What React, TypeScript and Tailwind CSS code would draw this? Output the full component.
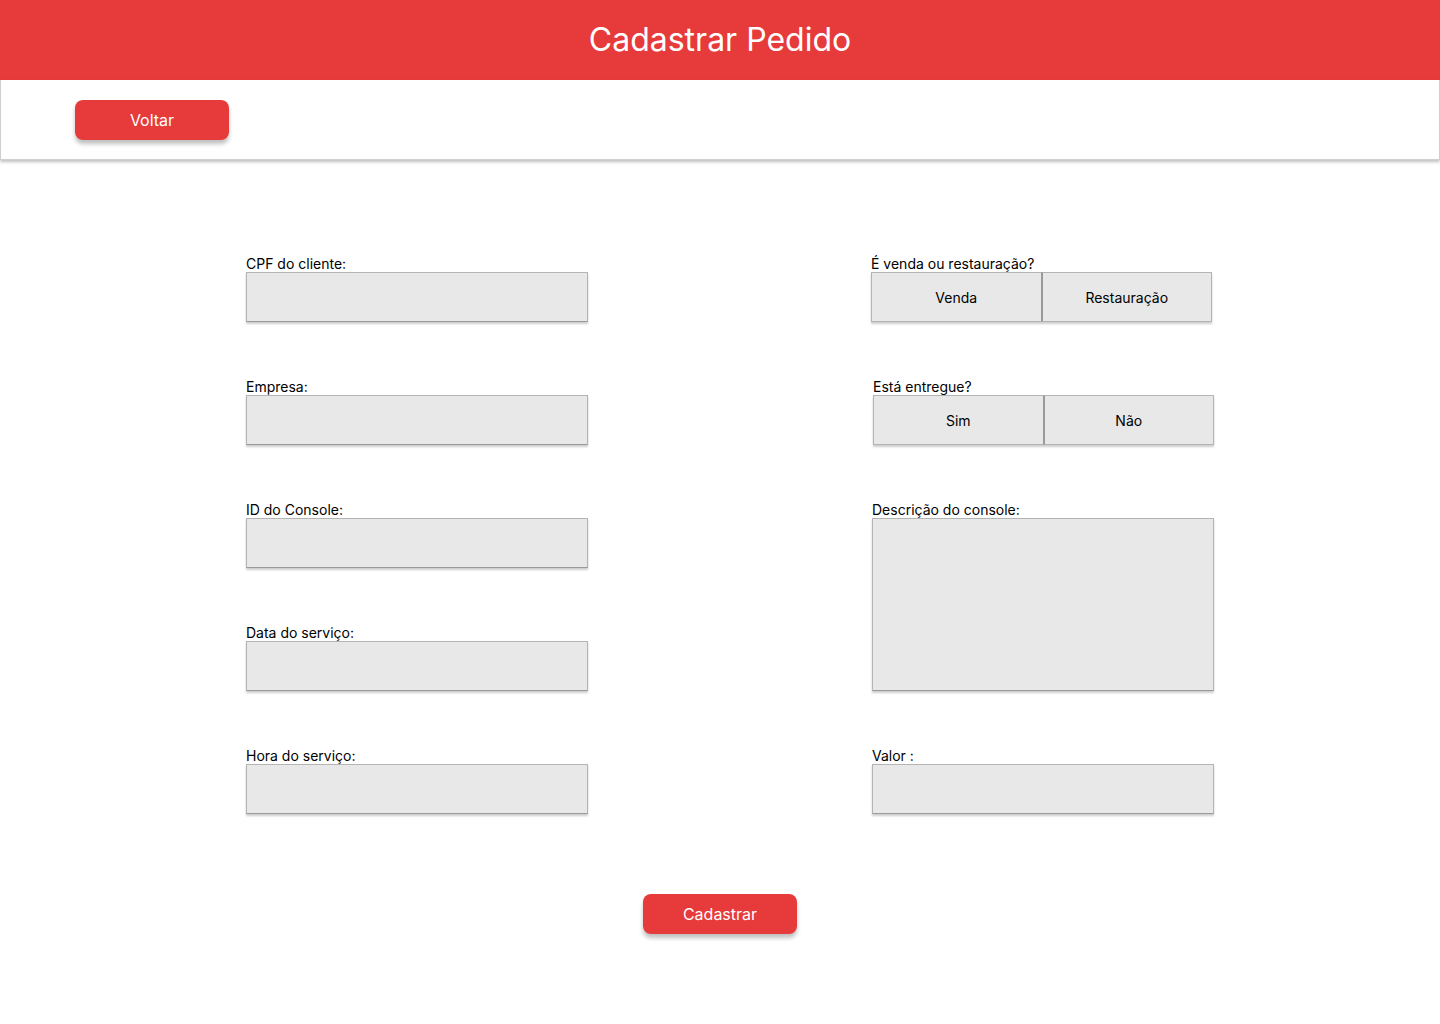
import React from "react";

const inputCls =
  "h-[50px] w-[342px] bg-[#e8e8e8] border border-[#b4b4b4] border-b-[#9a9a9a] shadow-[0_2px_2px_rgba(0,0,0,0.2)]";

function Field({ label, className = "" }: { label: string; className?: string }) {
  return (
    <div className={"flex flex-col " + className}>
      <span className="text-[14px] leading-[17px] text-black">{label}</span>
      <div className={inputCls} />
    </div>
  );
}

function Toggle({ label, a, b, className = "" }: { label: string; a: string; b: string; className?: string }) {
  return (
    <div className={"flex flex-col " + className}>
      <span className="text-[14px] leading-[17px] text-black">{label}</span>
      <div className="flex h-[50px] w-[341px] shadow-[0_2px_2px_rgba(0,0,0,0.2)]">
        <div className="flex flex-1 items-center justify-center bg-[#e8e8e8] border border-[#b4b4b4] border-r-[#9a9a9a] text-[14px] text-black">
          {a}
        </div>
        <div className="flex flex-1 items-center justify-center bg-[#e8e8e8] border border-[#b4b4b4] border-l-[#9a9a9a] text-[14px] text-black">
          {b}
        </div>
      </div>
    </div>
  );
}

export default function App() {
  return (
    <div className="min-h-[1024px] w-full bg-white" style={{ fontFamily: "Inter, 'Noto Sans', sans-serif" }}>
      <header className="flex h-[80px] items-center justify-center bg-[#e73a3a]">
        <h1 className="text-[32px] font-normal leading-none text-white">Cadastrar Pedido</h1>
      </header>
      <div className="flex h-[80px] items-center border-x border-b border-[#cfcfcf] pl-[74px] shadow-[0_2px_3px_rgba(0,0,0,0.25)]">
        <button className="h-[40px] w-[154px] rounded-lg bg-[#e73a3a] pt-px text-[16px] text-white shadow-[0_4px_4px_rgba(0,0,0,0.25)]">
          Voltar
        </button>
      </div>
      <main className="flex flex-col">
        <div className="mt-[95px] flex pl-[246px] gap-[284px]">
          <div className="flex flex-col gap-[56px]">
            <Field label="CPF do cliente:" />
            <Field label="Empresa:" />
            <Field label="ID do Console:" />
            <Field label="Data do serviço:" />
            <Field label="Hora do serviço:" />
          </div>
          <div className="flex flex-col gap-[56px]">
            <Toggle label="É venda ou restauração?" a="Venda" b="Restauração" className="-ml-px" />
            <Toggle label="Está entregue?" a="Sim" b="Não" className="ml-px" />
            <div className="flex flex-col">
              <span className="text-[14px] leading-[17px] text-black">Descrição do console:</span>
              <div className="h-[173px] w-[342px] bg-[#e8e8e8] border border-[#b4b4b4] border-b-[#9a9a9a] shadow-[0_2px_2px_rgba(0,0,0,0.2)]" />
            </div>
            <Field label="Valor :" />
          </div>
        </div>
        <div className="mt-[80px] flex justify-center">
          <button className="h-[40px] w-[154px] rounded-lg bg-[#e73a3a] text-[16px] text-white shadow-[0_4px_4px_rgba(0,0,0,0.25)]">
            Cadastrar
          </button>
        </div>
      </main>
    </div>
  );
}
